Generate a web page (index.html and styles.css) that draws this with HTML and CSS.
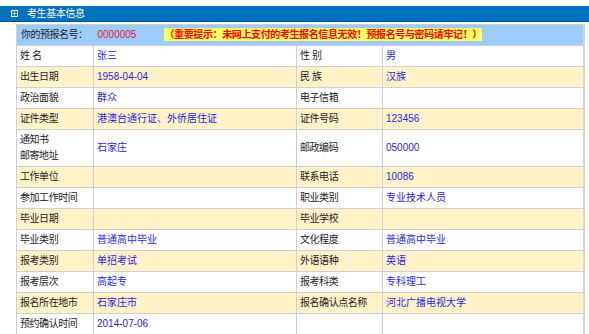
FILE: index.html
```html
<!DOCTYPE html>
<html lang="zh-CN">
<head>
<meta charset="utf-8">
<title>考生基本信息</title>
<link rel="stylesheet" href="styles.css">
</head>
<body>
<div class="titlebar">
  <svg class="ticon" width="7" height="7" viewBox="0 0 7 7"><rect x="0.5" y="0.5" width="6" height="6" fill="none" stroke="#fff" stroke-width="1"/><path d="M3.5 1.5v4M1.5 3.5h4" stroke="#fff" stroke-width="1"/></svg>
  <span class="ttext">考生基本信息</span>
</div>
<table class="info">
  <colgroup>
    <col class="c1"><col class="c2"><col class="c3"><col class="c4">
  </colgroup>
  <tr class="head">
    <td colspan="4"><span class="hlabel">你的预报名号：</span><span class="hnum">0000005</span><span class="notice">（重要提示：未网上支付的考生报名信息无效！预报名号与密码请牢记！）</span></td>
  </tr>
  <tr><td class="lb">姓 名</td><td class="v">张三</td><td class="lb">性 别</td><td class="v">男</td></tr>
  <tr class="alt"><td class="lb">出生日期</td><td class="v">1958-04-04</td><td class="lb">民 族</td><td class="v">汉族</td></tr>
  <tr><td class="lb">政治面貌</td><td class="v">群众</td><td class="lb">电子信箱</td><td class="v"></td></tr>
  <tr class="alt"><td class="lb">证件类型</td><td class="v">港澳台通行证、外侨居住证</td><td class="lb">证件号码</td><td class="v">123456</td></tr>
  <tr><td class="lb">通知书<br>邮寄地址</td><td class="v">石家庄</td><td class="lb">邮政编码</td><td class="v">050000</td></tr>
  <tr class="alt"><td class="lb">工作单位</td><td class="v"></td><td class="lb">联系电话</td><td class="v">10086</td></tr>
  <tr><td class="lb">参加工作时间</td><td class="v"></td><td class="lb">职业类别</td><td class="v">专业技术人员</td></tr>
  <tr class="alt"><td class="lb">毕业日期</td><td class="v"></td><td class="lb">毕业学校</td><td class="v"></td></tr>
  <tr><td class="lb">毕业类别</td><td class="v">普通高中毕业</td><td class="lb">文化程度</td><td class="v">普通高中毕业</td></tr>
  <tr class="alt"><td class="lb">报考类别</td><td class="v">单招考试</td><td class="lb">外语语种</td><td class="v">英语</td></tr>
  <tr><td class="lb">报考层次</td><td class="v">高起专</td><td class="lb">报考科类</td><td class="v">专科理工</td></tr>
  <tr class="alt"><td class="lb">报名所在地市</td><td class="v">石家庄市</td><td class="lb">报名确认点名称</td><td class="v">河北广播电视大学</td></tr>
  <tr><td class="lb">预约确认时间</td><td class="v">2014-07-06</td><td class="lb"></td><td class="v"></td></tr>
</table>
<div class="bottomline"></div>
</body>
</html>
```
FILE: styles.css
```css
html, body {
  margin: 0;
  padding: 0;
  background: #fff;
}
body {
  font-family: "Liberation Sans", "Noto Sans CJK SC", sans-serif;
  font-size: 10px;
  color: #222;
}
.titlebar {
  margin-top: 6px;
  height: 15px;
  background: #0071bc;
  border-bottom: 1px solid #00589a;
  display: flex;
  align-items: center;
  margin-bottom: 2px;
}
.ticon {
  margin-left: 11px;
  display: block;
}
.ttext {
  color: #fff;
  margin-left: 9px;
  line-height: 15px;
  letter-spacing: -0.4px;
}
.info {
  margin-left: 16px;
  width: 567px;
  border-collapse: collapse;
  table-layout: fixed;
  border: 1px solid #cfcfcf;
  border-right: 2px solid #d6d6d6;
}
.c1 { width: 77px; }
.c2 { width: 203px; }
.c3 { width: 86px; }
.c4 { width: 201px; }
.info td {
  border: 1px solid #cfcfcf;
  padding: 2px 3px;
  line-height: 16px;
  height: 16px;
  vertical-align: middle;
  white-space: nowrap;
  overflow: hidden;
}
.info td.lb {
  letter-spacing: -0.45px;
}
.info tr.alt td {
  background: #fff2c9;
}
.info tr.head td {
  background: #9ccbff;
  padding-left: 4px;
}
.hlabel {
  color: #222;
  letter-spacing: -0.5px;
}
.hnum {
  color: #e82020;
  margin-left: 10px;
}
.notice {
  margin-left: 28px;
  background: #ffff66;
  color: #ff0000;
  font-weight: bold;
  line-height: 13px;
  display: inline-block;
  letter-spacing: -0.38px;
}
.info td.v {
  color: #1f1fe6;
}
.bottomline {
  height: 2px;
  background: #4ba2e4;
}
```
